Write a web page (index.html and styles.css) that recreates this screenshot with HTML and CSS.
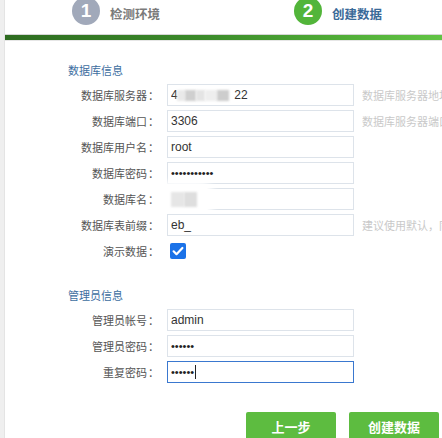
FILE: index.html
```html
<!DOCTYPE html>
<html lang="zh-CN">
<head>
<meta charset="utf-8">
<title>安装 - 创建数据</title>
<link rel="stylesheet" href="styles.css">
</head>
<body>
<div class="page">
  <aside class="rail"></aside>
  <main class="main">
    <header class="steps">
      <div class="step done"><span class="num">1</span><span class="step-name">检测环境</span></div>
      <div class="step current"><span class="num">2</span><span class="step-name">创建数据</span></div>
    </header>
    <div class="bar"></div>

    <form class="form">
      <h3 class="sec-title">数据库信息</h3>
      <div class="grid">
        <label class="lbl">数据库服务器<span class="colon">：</span></label>
        <div class="field">
          <input class="inp" type="text" value="4                 22">
          <div class="mask mask-ip"><i class="b1"></i><i class="b2"></i><i class="b3"></i><i class="b4"></i><i class="b5"></i></div>
        </div>
        <span class="hint">数据库服务器地址，一般为localhost</span>

        <label class="lbl">数据库端口<span class="colon">：</span></label>
        <div class="field"><input class="inp" type="text" value="3306"></div>
        <span class="hint">数据库服务器端口，一般为3306</span>

        <label class="lbl">数据库用户名<span class="colon">：</span></label>
        <div class="field"><input class="inp" type="text" value="root"></div>
        <span class="hint"></span>

        <label class="lbl">数据库密码<span class="colon">：</span></label>
        <div class="field"><input class="inp" type="password" value="12345678901"></div>
        <span class="hint"></span>

        <label class="lbl">数据库名<span class="colon">：</span></label>
        <div class="field">
          <input class="inp" type="text" value="">
          <div class="mask mask-db"><i class="c1"></i><i class="c2"></i></div>
        </div>
        <span class="hint"></span>

        <label class="lbl">数据库表前缀<span class="colon">：</span></label>
        <div class="field"><input class="inp" type="text" value="eb_"></div>
        <span class="hint">建议使用默认，同一数据库安装多个时需修改</span>

        <label class="lbl">演示数据<span class="colon">：</span></label>
        <div class="field">
          <span class="check"><svg viewBox="0 0 16 16" width="16" height="16"><path d="M3.6 8.3l2.9 2.9 5.9-6.2" fill="none" stroke="#fff" stroke-width="2.2" stroke-linecap="round" stroke-linejoin="round"/></svg></span>
        </div>
        <span class="hint"></span>
      </div>

      <h3 class="sec-title sec-2">管理员信息</h3>
      <div class="grid">
        <label class="lbl">管理员帐号<span class="colon">：</span></label>
        <div class="field"><input class="inp" type="text" value="admin"></div>
        <span class="hint"></span>

        <label class="lbl">管理员密码<span class="colon">：</span></label>
        <div class="field"><input class="inp" type="password" value="123456"></div>
        <span class="hint"></span>

        <label class="lbl">重复密码<span class="colon">：</span></label>
        <div class="field"><input class="inp focus" type="password" value="123456"><span class="caret"></span></div>
        <span class="hint"></span>
      </div>

      <div class="actions">
        <button type="button" class="btn">上一步</button>
        <button type="button" class="btn">创建数据</button>
      </div>
    </form>
  </main>
</div>
</body>
</html>
```
FILE: styles.css
```css
* { box-sizing: border-box; }
html, body { margin: 0; padding: 0; }
body {
  width: 442px;
  height: 438px;
  overflow: hidden;
  background: #fff;
  font-family: "Liberation Sans", "Noto Sans CJK SC", sans-serif;
  color: #555;
}
.page { display: flex; height: 438px; }
.rail {
  width: 5px;
  flex: none;
  background: #efefef;
  border-right: 1px solid #e4e4e4;
}
.main { flex: 1; min-width: 0; }

/* steps */
.steps {
  height: 34px;
  display: flex;
  padding-left: 67px;
  overflow: hidden;
}
.step {
  width: 222px;
  flex: none;
  display: flex;
  align-items: flex-start;
}
.num {
  width: 28px;
  height: 28px;
  margin-top: -3px;
  border-radius: 50%;
  background: #a1a9ba;
  color: #fff;
  font-family: "Liberation Sans", sans-serif;
  font-weight: 700;
  font-size: 19px;
  line-height: 28px;
  text-align: center;
}
.current .num { background: #52b53a; }
.step-name {
  margin-left: 10px;
  padding-top: 5px;
  font-family: "Noto Sans CJK SC", sans-serif;
  font-size: 12.5px;
  line-height: 18px;
  font-weight: 700;
  color: #7a7a7a;
}
.current .step-name { color: #3a6a98; }

.bar {
  height: 7px;
  border-top: 1px solid #d6d6d6;
  border-bottom: 1px solid #e6e6e6;
  background: linear-gradient(90deg, #2e6c20 0%, #3b8a2a 45%, #4fab36 75%, #62c445 100%);
}

/* form */
.form { margin: 0; }
.sec-title {
  margin: 21px 0 6px 63px;
  font-family: "Noto Sans CJK SC", sans-serif;
  font-size: 11px;
  line-height: 16px;
  font-weight: 400;
  color: #3d6e9f;
}
.sec-2 { margin-top: 25px; }
.grid {
  display: grid;
  grid-template-columns: 154px 187px 1fr;
  column-gap: 8px;
  row-gap: 4px;
  grid-auto-rows: 22px;
}
.lbl {
  text-align: right;
  font-family: "Noto Sans CJK SC", sans-serif;
  font-size: 11px;
  line-height: 22px;
  color: #555;
  white-space: nowrap;
}
.colon {
  font-family: "Noto Sans CJK TC", sans-serif;
  margin-left: 1px;
}
.field { position: relative; }
.inp {
  width: 187px;
  height: 22px;
  margin: 0;
  padding: 0 3px;
  border: 1px solid #dde3ea;
  border-radius: 0;
  background: #fff;
  font-family: "Liberation Sans", sans-serif;
  font-size: 12px;
  color: #333;
  outline: none;
}
.inp[type="password"] { font-size: 11px; color: #222; }
.inp.focus { border-color: #3a78cf; }
.caret {
  position: absolute;
  left: 28px;
  top: 4px;
  width: 1px;
  height: 14px;
  background: #222;
}
.hint {
  font-family: "Noto Sans CJK SC", sans-serif;
  font-size: 11px;
  line-height: 22px;
  color: #c9c9c9;
  white-space: nowrap;
  overflow: hidden;
}

/* blur masks over private data */
.mask { position: absolute; display: flex; align-items: center; }
.mask i { display: block; filter: blur(1px); }
.mask-ip { left: 10px; top: 3px; height: 16px; }
.mask-ip i { height: 11px; }
.mask-ip .b1 { width: 8px; background: #e9e9e9; }
.mask-ip .b2 { width: 11px; background: #cfcfcf; }
.mask-ip .b3 { width: 9px; background: #e4e4e4; }
.mask-ip .b4 { width: 12px; background: #eeeeee; }
.mask-ip .b5 { width: 12px; background: #cdcdcd; }
.mask-db {
  left: -8px;
  top: -3px;
  width: 52px;
  height: 28px;
  padding-left: 12px;
  background: #fff;
  border-radius: 12px;
  box-shadow: 0 0 6px 4px #fff;
}
.mask-db i { height: 15px; }
.mask-db .c1 { width: 13px; background: #e6e6e6; }
.mask-db .c2 { width: 13px; background: #dedede; }

.check {
  display: block;
  width: 16px;
  height: 16px;
  margin: 3px 0 0 3px;
  border-radius: 2px;
  background: #1b72e8;
}
.check svg { display: block; }

.actions {
  display: flex;
  justify-content: flex-end;
  gap: 13px;
  margin-top: 29px;
  padding-right: 3px;
}
.btn {
  width: 90px;
  height: 28px;
  border: 0;
  border-radius: 2px;
  background: #5dbc40;
  color: #fff;
  font-family: "Noto Sans CJK SC", sans-serif;
  font-size: 13px;
  font-weight: 700;
  cursor: pointer;
}
```
